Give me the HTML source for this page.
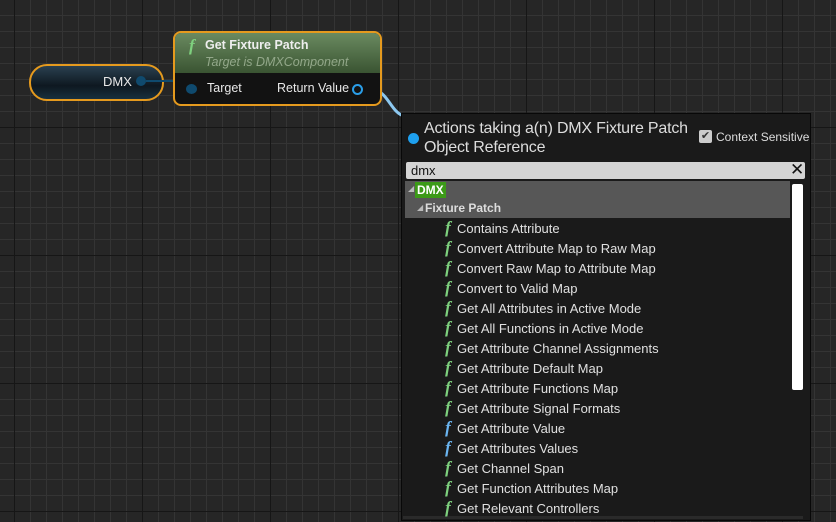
<!DOCTYPE html><html><head><style>
body{margin:0;width:836px;height:522px;overflow:hidden;position:relative;font-family:"Liberation Sans",sans-serif;
background-color:#262626;
background-image:linear-gradient(90deg,#161616 1px,transparent 1px),linear-gradient(0deg,#161616 1px,transparent 1px),linear-gradient(90deg,#343434 1px,transparent 1px),linear-gradient(0deg,#343434 1px,transparent 1px);
background-size:128px 128px,128px 128px,16px 16px,16px 16px;
background-position:14px 0,0 0,14px 0,0 0;}
.abs{position:absolute}
.f{font-family:"Liberation Serif",serif;font-style:italic;font-weight:bold;color:#7ed07e;font-size:17px}
.row{position:absolute;left:440px;height:20px;line-height:20px;font-size:13px;color:#e0e0e0;white-space:nowrap}
.row .f{display:inline-block;width:16px;text-align:center;margin-right:1px}
.b .f{color:#6ab4f0}
</style></head><body>
<div class="abs" style="left:29px;top:64px;width:131px;height:33px;border:2px solid #e59a1e;border-radius:18px;background:linear-gradient(#2a4050,#0e1820 60%,#18303e);"></div>
<div class="abs" style="left:103px;top:74px;color:#e8e8e8;font-size:13px">DMX</div>
<div class="abs" style="left:136px;top:76px;width:10px;height:10px;border-radius:50%;background:#0f4a6e"></div>
<svg class="abs" style="left:0;top:0" width="836" height="522"><path d="M372 90 C388 90,390 112,404 116" stroke="#8cc8f0" stroke-width="3" fill="none"/><path d="M146 81 L173 81" stroke="#0f4a6e" stroke-width="2"/></svg>
<div class="abs" style="left:173px;top:31px;width:205px;height:71px;border:2px solid #e59a1e;border-radius:8px;background:#121212;overflow:hidden">
<div style="height:40px;background:linear-gradient(#6a8a60,#3a5432);"></div></div>
<div class="abs f" style="left:189px;top:36px">f</div>
<div class="abs" style="left:205px;top:38px;color:#eee;font-size:12.5px;font-weight:bold">Get Fixture Patch</div>
<div class="abs" style="left:205px;top:55px;color:#93a88a;font-size:12.5px;font-style:italic">Target is DMXComponent</div>
<div class="abs" style="left:186px;top:84px;width:11px;height:10px;border-radius:50%;background:#0f4a6e"></div>
<div class="abs" style="left:207px;top:81px;color:#e8e8e8;font-size:12.5px">Target</div>
<div class="abs" style="left:277px;top:81px;color:#e8e8e8;font-size:12.5px">Return Value</div>
<div class="abs" style="left:352px;top:84px;width:7px;height:7px;border-radius:50%;border:2px solid #2a9ee8"></div>
<div class="abs" style="left:401px;top:113px;width:408px;height:406px;background:#1a1a1a;border:1px solid #080808"></div>
<div class="abs" style="left:408px;top:133px;width:11px;height:11px;border-radius:50%;background:#1ea0ef"></div>
<div class="abs" style="left:424px;top:119px;color:#ddd;font-size:16px;line-height:19px;letter-spacing:-0.2px">Actions taking a(n) DMX Fixture Patch<br>Object Reference</div>
<div class="abs" style="left:699px;top:130px;width:13px;height:13px;background:#ccc;border-radius:2px;color:#333;font-size:11px;line-height:13px;text-align:center">✔</div>
<div class="abs" style="left:716px;top:130px;width:94px;overflow:hidden;white-space:nowrap;color:#ddd;font-size:12px">Context Sensitive</div>
<div class="abs" style="left:406px;top:162px;width:399px;height:17px;background:#d4d4d4;border-radius:2px"></div>
<div class="abs" style="left:411px;top:163px;color:#111;font-size:13px">dmx</div>
<div class="abs" style="left:790px;top:161px;color:#111;font-size:17px;line-height:17px">✕</div>
<div class="abs" style="left:405px;top:181px;width:385px;height:37px;background:#575757"></div>
<div class="abs" style="left:408px;top:184px;color:#bbb;font-size:8px">◢</div>
<div class="abs" style="left:415px;top:182px;background:#3c9a18;color:#fff;font-size:12px;font-weight:bold;padding:0 2px;line-height:16px">DMX</div>
<div class="abs" style="left:417px;top:203px;color:#bbb;font-size:8px">◢</div>
<div class="abs" style="left:425px;top:201px;color:#ddd;font-size:12px;font-weight:bold">Fixture Patch</div>
<div class="abs" style="left:792px;top:184px;width:11px;height:206px;background:#fff;border-radius:2px"></div>
<div class="abs" style="left:403px;top:516px;width:400px;height:3px;background:#2a2a2a"></div>
<div class="row" style="top:218px"><span class="f">f</span>Contains Attribute</div>
<div class="row" style="top:238px"><span class="f">f</span>Convert Attribute Map to Raw Map</div>
<div class="row" style="top:258px"><span class="f">f</span>Convert Raw Map to Attribute Map</div>
<div class="row" style="top:278px"><span class="f">f</span>Convert to Valid Map</div>
<div class="row" style="top:298px"><span class="f">f</span>Get All Attributes in Active Mode</div>
<div class="row" style="top:318px"><span class="f">f</span>Get All Functions in Active Mode</div>
<div class="row" style="top:338px"><span class="f">f</span>Get Attribute Channel Assignments</div>
<div class="row" style="top:358px"><span class="f">f</span>Get Attribute Default Map</div>
<div class="row" style="top:378px"><span class="f">f</span>Get Attribute Functions Map</div>
<div class="row" style="top:398px"><span class="f">f</span>Get Attribute Signal Formats</div>
<div class="row b" style="top:418px"><span class="f">f</span>Get Attribute Value</div>
<div class="row b" style="top:438px"><span class="f">f</span>Get Attributes Values</div>
<div class="row" style="top:458px"><span class="f">f</span>Get Channel Span</div>
<div class="row" style="top:478px"><span class="f">f</span>Get Function Attributes Map</div>
<div class="row" style="top:498px"><span class="f">f</span>Get Relevant Controllers</div>
</body></html>
